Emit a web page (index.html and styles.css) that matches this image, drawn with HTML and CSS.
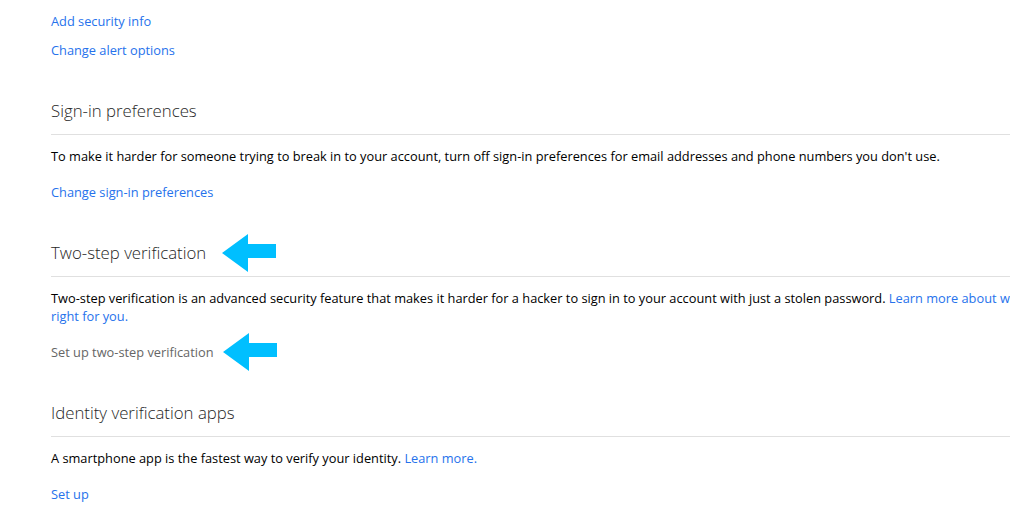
FILE: index.html
```html
<!DOCTYPE html>
<html lang="en">
<head>
    <meta charset="UTF-8">
    <title>Security settings</title>
    <link rel="stylesheet" href="styles.css">
</head>
<body>
    <div class="page">
        <div class="links-top">
            <a href="#" class="link">Add security info</a>
            <a href="#" class="link">Change alert options</a>
        </div>

        <div class="section">
            <h2 class="section-title">Sign-in preferences</h2>
            <p class="desc">To make it harder for someone trying to break in to your account, turn off sign-in preferences for email addresses and phone numbers you don't use.</p>
            <a href="#" class="link">Change sign-in preferences</a>
        </div>

        <div class="section">
            <h2 class="section-title">
                <span>Two-step verification</span>
                <svg class="arrow" width="54" height="38" viewBox="0 0 54 38"><path d="M0 19 L26 0 L26 10 L54 10 L54 24 L26 24 L26 38 Z"/></svg>
            </h2>
            <p class="desc">Two-step verification is an advanced security feature that makes it harder for a hacker to sign in to your account with just a stolen password. <a href="#" class="link">Learn more about whether two-step verification is right for you.</a></p>
            <div class="action-row">
                <a href="#" class="link muted">Set up two-step verification</a>
                <svg class="arrow" width="54" height="38" viewBox="0 0 54 38"><path d="M0 19 L26 0 L26 10 L54 10 L54 24 L26 24 L26 38 Z"/></svg>
            </div>
        </div>

        <div class="section">
            <h2 class="section-title">Identity verification apps</h2>
            <p class="desc">A smartphone app is the fastest way to verify your identity. <a href="#" class="link">Learn more.</a></p>
            <a href="#" class="link">Set up</a>
        </div>
    </div>
</body>
</html>
```

FILE: styles.css
```css
html, body {
    margin: 0;
    overflow: hidden;
}
body {
    background-color: #fff;
    color: #000;
    font-family: "Open Sans", "Noto Sans", sans-serif;
    font-size: 12.8px;
    line-height: 18px;
}
.page {
    width: 1165px;
    padding: 12px 0 0 51px;
}
.link {
    color: #2672ec;
    text-decoration: none;
}
.link.muted {
    color: #666;
}
.links-top {
    display: flex;
    flex-direction: column;
    align-items: flex-start;
    gap: 11px;
}
.section {
    display: flex;
    flex-direction: column;
    align-items: flex-start;
    margin-top: 38px;
}
.section-title {
    align-self: stretch;
    display: flex;
    align-items: center;
    gap: 16px;
    margin: 0;
    padding-bottom: 9px;
    border-bottom: 1px solid #e0e0e0;
    font-size: 16.8px;
    font-weight: 300;
    line-height: 28px;
    color: #262626;
}
.section-title .arrow {
    margin: -5px 0;
}
.desc {
    margin: 12px 0 18px;
}
.action-row {
    display: flex;
    align-items: center;
    gap: 9px;
    height: 18px;
}
.action-row .arrow {
    margin: -10px 0;
}
.arrow {
    fill: #00bfff;
    flex-shrink: 0;
}
```
